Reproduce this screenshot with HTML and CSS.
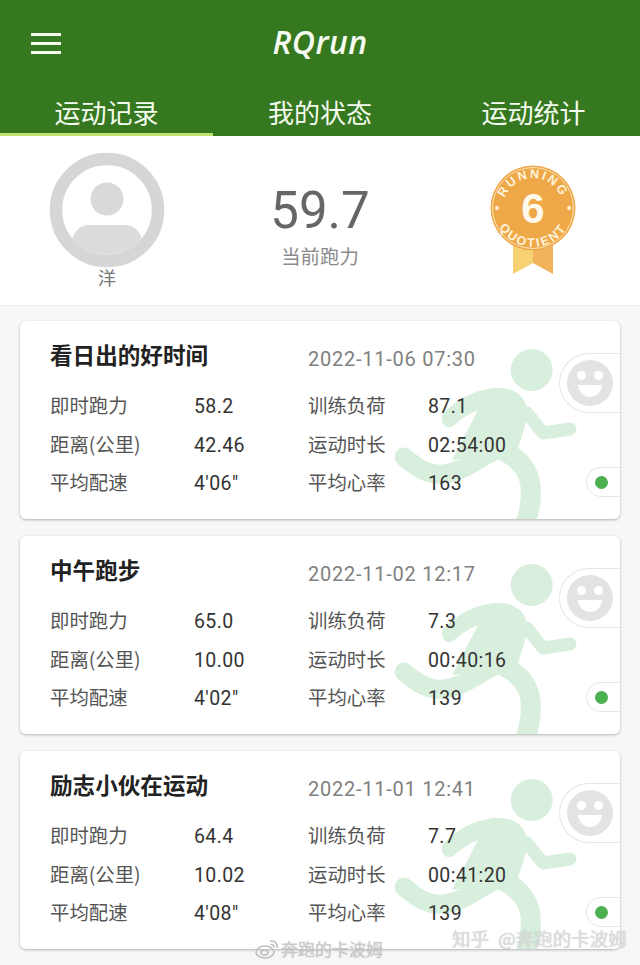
FILE: index.html
```html
<!DOCTYPE html>
<html lang="zh">
<head>
<meta charset="utf-8">
<title>RQrun</title>
<link rel="stylesheet" href="styles.css">
</head>
<body>
<svg class="defs" width="0" height="0" aria-hidden="true">
  <defs>
    <g id="runner" fill="#d9efdd">
      <circle cx="151.7" cy="40" r="21"/>
      <path d="M63 84C78 68 100 57 121 58C137 59 148 69 147 84C146 96 141 108 138 118L108 126L72 130L98 80C88 84 80 90 73 96C66 100 59 92 63 84Z"/>
      <path d="M147 83L163 103L190 99" fill="none" stroke="#d9efdd" stroke-width="13" stroke-linecap="round" stroke-linejoin="round"/>
      <path d="M24 127C36 137 48 146 64 144C82 142 96 130 112 122" fill="none" stroke="#d9efdd" stroke-width="19" stroke-linecap="round" stroke-linejoin="round"/>
      <path d="M110 116C130 122 146 132 150 152C153 170 148 184 144 200" fill="none" stroke="#d9efdd" stroke-width="20" stroke-linejoin="round"/>
    </g>
    <g id="smile">
      <circle cx="24" cy="24" r="23" fill="#e3e3e3"/>
      <circle cx="15.500" cy="16.500" r="4.500" fill="#fff"/>
      <circle cx="32.500" cy="16.500" r="4.500" fill="#fff"/>
      <path d="M12 26H36C35 34 30 38 24 38C18 38 13 34 12 26Z" fill="#fff"/>
    </g>
  </defs>
</svg>
<div class="app">
  <header class="header">
    <div class="topbar">
      <div class="menu"><span></span><span></span><span></span></div>
      <div class="logo">RQrun</div>
    </div>
    <nav class="tabs">
      <div class="tab active">运动记录</div>
      <div class="tab">我的状态</div>
      <div class="tab">运动统计</div>
    </nav>
  </header>

  <section class="profile">
    <div class="user">
      <svg class="avatar" width="116" height="116" viewBox="0 0 116 116">
        <defs><clipPath id="inner"><circle cx="58" cy="58" r="45"/></clipPath></defs>
        <circle cx="58" cy="58" r="51" fill="#fff" stroke="#d6d6d6" stroke-width="12.500"/>
        <circle cx="58" cy="47" r="16.500" fill="#d9d9d9"/>
        <rect x="23" y="73" width="70" height="50" rx="17" fill="#dcdcdc" clip-path="url(#inner)"/>
      </svg>
      <div class="user-name">洋</div>
    </div>
    <div class="score">
      <div class="score-value">59.7</div>
      <div class="score-label">当前跑力</div>
    </div>
    <svg class="badge" width="90" height="115" viewBox="0 0 90 115">
      <defs>
        <path id="arcTop" d="M15 45A30 30 0 0 1 75 45"/>
        <path id="arcBottom" d="M6 45A39 39 0 0 0 84 45"/>
      </defs>
      <path d="M25 78H45V100L25 111Z" fill="#f7d272"/>
      <path d="M45 78H65V111L45 100Z" fill="#f2b35c"/>
      <circle cx="45" cy="45" r="42.500" fill="#efa847"/>
      <circle cx="45" cy="45" r="40.500" fill="none" stroke="#fbe2b8" stroke-width="1"/>
      <text class="badge-ring"><textPath href="#arcTop" startOffset="50%" text-anchor="middle">RUNNING</textPath></text>
      <text class="badge-ring"><textPath href="#arcBottom" startOffset="50%" text-anchor="middle">QUOTIENT</textPath></text>
      <circle cx="9" cy="45" r="2" fill="#fdf0d8"/>
      <circle cx="81" cy="45" r="2" fill="#fdf0d8"/>
      <text class="badge-num" x="45" y="60" text-anchor="middle">6</text>
    </svg>
  </section>

  <main class="list">
    <article class="card">
      <svg class="runner" width="260" height="200" viewBox="0 0 260 200"><use href="#runner"/></svg>
      <div class="mood"><svg width="48" height="48" viewBox="0 0 48 48"><use href="#smile"/></svg></div>
      <div class="toggle"><span class="dot"></span></div>
      <div class="grid">
        <h2 class="title">看日出的好时间</h2><div class="date">2022-11-06 07:30</div>
        <span class="label">即时跑力</span><span class="value">58.2</span><span class="label">训练负荷</span><span class="value">87.1</span>
        <span class="label">距离(公里)</span><span class="value">42.46</span><span class="label">运动时长</span><span class="value">02:54:00</span>
        <span class="label">平均配速</span><span class="value">4'06"</span><span class="label">平均心率</span><span class="value">163</span>
      </div>
    </article>
    <article class="card">
      <svg class="runner" width="260" height="200" viewBox="0 0 260 200"><use href="#runner"/></svg>
      <div class="mood"><svg width="48" height="48" viewBox="0 0 48 48"><use href="#smile"/></svg></div>
      <div class="toggle"><span class="dot"></span></div>
      <div class="grid">
        <h2 class="title">中午跑步</h2><div class="date">2022-11-02 12:17</div>
        <span class="label">即时跑力</span><span class="value">65.0</span><span class="label">训练负荷</span><span class="value">7.3</span>
        <span class="label">距离(公里)</span><span class="value">10.00</span><span class="label">运动时长</span><span class="value">00:40:16</span>
        <span class="label">平均配速</span><span class="value">4'02"</span><span class="label">平均心率</span><span class="value">139</span>
      </div>
    </article>
    <article class="card">
      <svg class="runner" width="260" height="200" viewBox="0 0 260 200"><use href="#runner"/></svg>
      <div class="mood"><svg width="48" height="48" viewBox="0 0 48 48"><use href="#smile"/></svg></div>
      <div class="toggle"><span class="dot"></span></div>
      <div class="grid">
        <h2 class="title">励志小伙在运动</h2><div class="date">2022-11-01 12:41</div>
        <span class="label">即时跑力</span><span class="value">64.4</span><span class="label">训练负荷</span><span class="value">7.7</span>
        <span class="label">距离(公里)</span><span class="value">10.02</span><span class="label">运动时长</span><span class="value">00:41:20</span>
        <span class="label">平均配速</span><span class="value">4'08"</span><span class="label">平均心率</span><span class="value">139</span>
      </div>
    </article>
  </main>

  <div class="wm wm-zhihu">知乎 @奔跑的卡波姆</div>
  <div class="wm wm-weibo">
    <svg width="24" height="20" viewBox="0 0 24 20" fill="none" stroke="#bdbdbd" stroke-width="1.500">
      <ellipse cx="10" cy="13" rx="9" ry="6"/>
      <ellipse cx="9.500" cy="13.500" rx="3.500" ry="2.600"/>
      <path d="M15 2C19 1 23 4 22 9M15.500 5.500C17.500 5 19.500 6.500 19 8.500"/>
    </svg>
    <span>奔跑的卡波姆</span>
  </div>
</div>
</body>
</html>
```

FILE: styles.css
```css
* { box-sizing: border-box; }
html, body { margin: 0; padding: 0; }
body {
  width: 640px;
  height: 965px;
  overflow: hidden;
  background: #f7f7f7;
  font-family: Roboto, "Noto Sans CJK SC", sans-serif;
}
.defs { position: absolute; }
.app { position: relative; width: 640px; height: 965px; overflow: hidden; }

.header { background: #36781f; height: 136px; color: #f4fbef; }
.topbar { position: relative; height: 86px; display: flex; align-items: center; justify-content: center; padding-bottom: 2px; }
.menu { position: absolute; left: 31px; top: 33px; width: 30px; display: flex; flex-direction: column; gap: 6px; }
.menu span { display: block; height: 3px; background: #f4fbef; }
.logo { font-family: "Open Sans", sans-serif; font-style: italic; font-weight: 600; font-size: 32px; line-height: 40px; letter-spacing: 0.4px; color: #f6fbf2; }
.tabs { display: grid; grid-template-columns: 213px 214px 213px; height: 50px; }
.tab { font-family: "Noto Sans CJK SC", sans-serif; font-size: 26px; line-height: 38px; padding-top: 7px; text-align: center; border-bottom: 3px solid transparent; }
.tab.active { border-bottom-color: #bfe06c; }

.profile { position: relative; height: 170px; background: #fff; border-bottom: 1px solid #ececec; display: block; }
.user { position: absolute; left: 49px; top: 16px; width: 116px; display: flex; flex-direction: column; align-items: center; }
.avatar { display: block; }
.user-name { font-family: "Noto Sans CJK SC", sans-serif; font-size: 18px; line-height: 22px; color: #777; margin-top: -2px; }
.score { position: absolute; left: 220px; width: 200px; top: 45px; text-align: center; }
.score-value { font-size: 51px; line-height: 60px; color: #666; }
.score-label { font-family: "Noto Sans CJK SC", sans-serif; font-size: 19.400px; line-height: 28px; color: #8a8a8a; margin-top: 1px; }
.badge { position: absolute; left: 488px; top: 27px; }
.badge-ring { font-family: "Liberation Sans", sans-serif; font-weight: 700; font-size: 12.500px; letter-spacing: 2.200px; fill: #fff3dc; }
.badge-num { font-family: "Liberation Sans", sans-serif; font-weight: 700; font-size: 42px; fill: #fff9ec; }

.list { padding: 15px 20px 0; display: flex; flex-direction: column; gap: 17px; }
.card { position: relative; height: 198px; background: #fff; border-radius: 6px; box-shadow: 0 1px 3px rgba(0,0,0,.28); overflow: hidden; }
.runner { position: absolute; left: 360px; top: 9px; }
.mood { position: absolute; left: 539px; top: 32px; width: 80px; height: 60px; border: 1px solid #e6e6e6; border-right: 0; border-radius: 30px 0 0 30px; display: flex; align-items: center; padding-left: 6px; background: #fff; }
.mood svg { display: block; }
.toggle { position: absolute; left: 566px; top: 146px; width: 50px; height: 30px; border: 1px solid #e6e6e6; border-right: 0; border-radius: 15px 0 0 15px; display: flex; align-items: center; padding-left: 8px; background: #fff; }
.dot { width: 13px; height: 13px; border-radius: 50%; background: #4caf50; }

.grid { position: relative; padding: 21px 0 0 30px; display: grid; grid-template-columns: 144px 114px 120px 1fr; grid-template-rows: 44px 38.500px 38.500px 38.500px; }
.title { grid-column: 1 / 3; margin: 0; font-family: "Noto Sans CJK SC", sans-serif; font-size: 22.600px; font-weight: 700; line-height: 30px; margin-top: -2px; color: #222; height: 44px; }
.date { grid-column: 3 / 5; font-size: 20px; letter-spacing: 0.750px; line-height: 34px; color: #808080; white-space: nowrap; }
.label { font-family: "Noto Sans CJK SC", sans-serif; font-size: 19.400px; line-height: 38px; color: #555; white-space: nowrap; }
.value { font-size: 19.500px; line-height: 42px; letter-spacing: 0.400px; color: #333; white-space: nowrap; }

.wm { position: absolute; font-family: "Noto Sans CJK SC", sans-serif; font-size: 17px; line-height: 22px; color: rgba(205,205,205,.85); text-shadow: 0 0 1px rgba(120,120,120,.5); white-space: nowrap; }
.wm-zhihu { left: 452px; top: 927px; font-size: 18.500px; word-spacing: 5px; color: rgba(225,225,225,.9); }
.wm-weibo { left: 255px; top: 938px; display: flex; align-items: center; gap: 2px; }
```
